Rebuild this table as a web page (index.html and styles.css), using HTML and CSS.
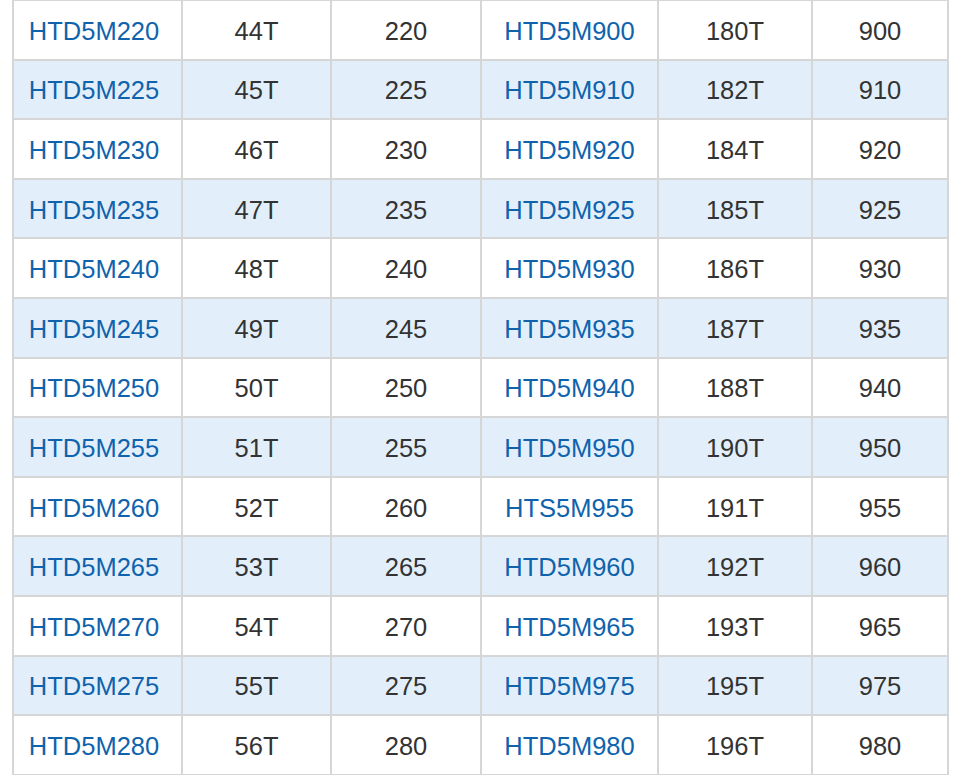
FILE: index.html
```html
<!DOCTYPE html>
<html>
<head>
<meta charset="utf-8">
<link rel="stylesheet" href="styles.css">
</head>
<body>
<div class="table">
  <div class="row"><div class="c code">HTD5M220</div><div class="c">44T</div><div class="c">220</div><div class="c code">HTD5M900</div><div class="c">180T</div><div class="c">900</div></div>
  <div class="row alt"><div class="c code">HTD5M225</div><div class="c">45T</div><div class="c">225</div><div class="c code">HTD5M910</div><div class="c">182T</div><div class="c">910</div></div>
  <div class="row"><div class="c code">HTD5M230</div><div class="c">46T</div><div class="c">230</div><div class="c code">HTD5M920</div><div class="c">184T</div><div class="c">920</div></div>
  <div class="row alt"><div class="c code">HTD5M235</div><div class="c">47T</div><div class="c">235</div><div class="c code">HTD5M925</div><div class="c">185T</div><div class="c">925</div></div>
  <div class="row"><div class="c code">HTD5M240</div><div class="c">48T</div><div class="c">240</div><div class="c code">HTD5M930</div><div class="c">186T</div><div class="c">930</div></div>
  <div class="row alt"><div class="c code">HTD5M245</div><div class="c">49T</div><div class="c">245</div><div class="c code">HTD5M935</div><div class="c">187T</div><div class="c">935</div></div>
  <div class="row"><div class="c code">HTD5M250</div><div class="c">50T</div><div class="c">250</div><div class="c code">HTD5M940</div><div class="c">188T</div><div class="c">940</div></div>
  <div class="row alt"><div class="c code">HTD5M255</div><div class="c">51T</div><div class="c">255</div><div class="c code">HTD5M950</div><div class="c">190T</div><div class="c">950</div></div>
  <div class="row"><div class="c code">HTD5M260</div><div class="c">52T</div><div class="c">260</div><div class="c code">HTS5M955</div><div class="c">191T</div><div class="c">955</div></div>
  <div class="row alt"><div class="c code">HTD5M265</div><div class="c">53T</div><div class="c">265</div><div class="c code">HTD5M960</div><div class="c">192T</div><div class="c">960</div></div>
  <div class="row"><div class="c code">HTD5M270</div><div class="c">54T</div><div class="c">270</div><div class="c code">HTD5M965</div><div class="c">193T</div><div class="c">965</div></div>
  <div class="row alt"><div class="c code">HTD5M275</div><div class="c">55T</div><div class="c">275</div><div class="c code">HTD5M975</div><div class="c">195T</div><div class="c">975</div></div>
  <div class="row"><div class="c code">HTD5M280</div><div class="c">56T</div><div class="c">280</div><div class="c code">HTD5M980</div><div class="c">196T</div><div class="c">980</div></div>
</div>
</body>
</html>
```

FILE: styles.css
```css
html, body {
  margin: 0;
  padding: 0;
  background: #ffffff;
}
body {
  font-family: "Liberation Sans", Arial, sans-serif;
  font-size: 25.5px;
  color: #333333;
}
.table {
  margin: -1px 0 0 12px;
  width: 933px;
  display: grid;
  grid-template-columns: 169px 149px 150px 177px 154px 134px;
  grid-auto-rows: 57.6px;
  row-gap: 2px;
  padding: 2px;
  background: #d6d6d6;
}
.row {
  display: contents;
}
.c {
  background: #ffffff;
  display: flex;
  align-items: center;
  justify-content: center;
  margin-right: 2px;
  padding-top: 3px;
}
.c:last-child {
  margin-right: 0;
}
.row.alt .c {
  background: #e2effb;
}
.code {
  color: #0f63ad;
}
.c:first-child {
  padding-right: 7px;
}
```
